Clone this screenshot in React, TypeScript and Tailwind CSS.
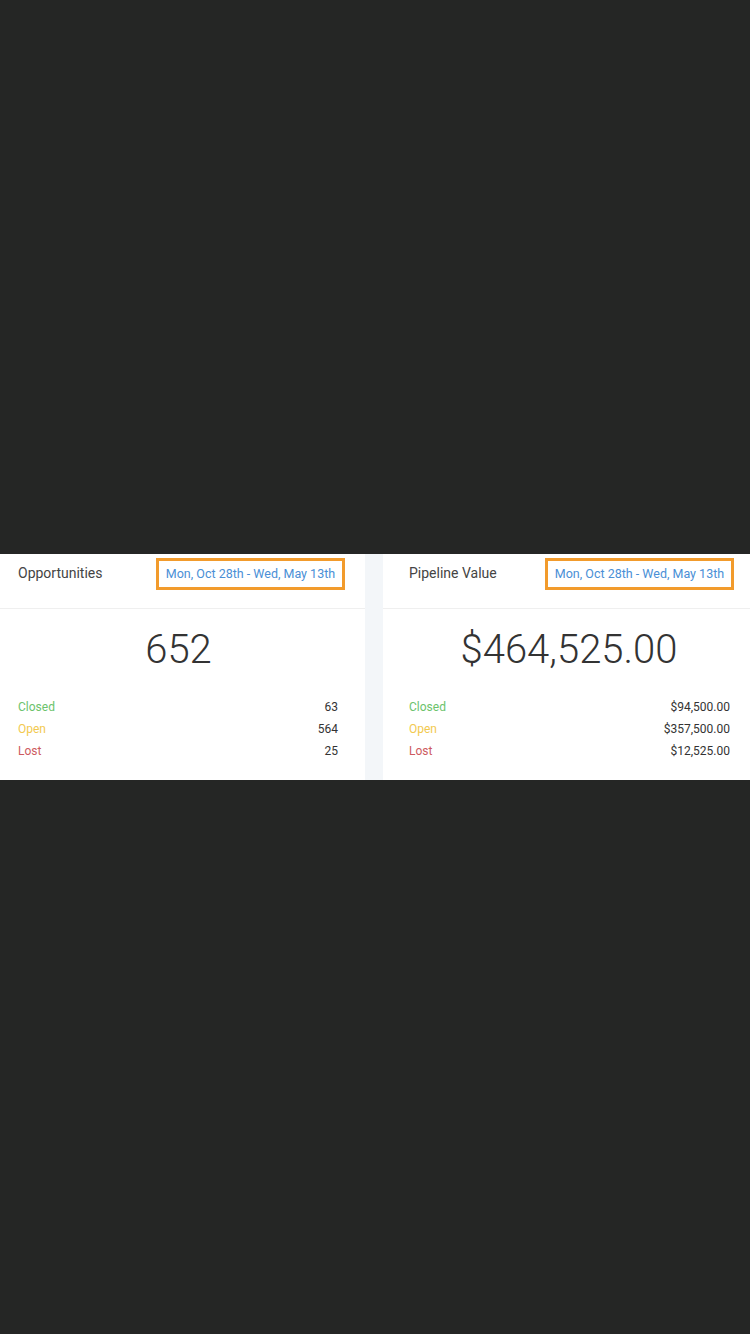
const rows = [
  { label: 'Closed', color: 'text-[#6cc36c]' },
  { label: 'Open', color: 'text-[#f2c94f]' },
  { label: 'Lost', color: 'text-[#cd5a60]' },
];

function DateRange() {
  return (
    <div className="flex h-[32px] w-[189px] items-center justify-center border-[3px] border-[#f29b2c] text-[12.5px] text-[#4a8fd6]">
      Mon, Oct 28th - Wed, May 13th
    </div>
  );
}

function StatCard({
  title,
  total,
  values,
  className,
  headerClass,
  totalClass,
  rowClass,
}: {
  title: string;
  total: string;
  values: string[];
  className: string;
  headerClass: string;
  totalClass: string;
  rowClass: string;
}) {
  return (
    <div className={`flex flex-col bg-white ${className}`}>
      {/* header with date range */}
      <div
        className={`flex h-[56px] items-start justify-between border-b border-[#efefef] pt-[4px] ${headerClass}`}
      >
        <div className="flex h-[32px] items-center pb-[1px] text-[14px] text-[#444]">{title}</div>
        <DateRange />
      </div>

      <div className={`pt-[17px] text-center text-[40px] font-light leading-[48px] text-[#333] ${totalClass}`}>
        {total}
      </div>

      <div className={`flex flex-col pt-[22px] pb-[18px] ${rowClass}`}>
        {rows.map((r, i) => (
          <div key={r.label} className="flex h-[22px] items-center justify-between text-[12px]">
            <span className={r.color}>{r.label}</span>
            <span className="text-[#333]">{values[i]}</span>
          </div>
        ))}
      </div>
    </div>
  );
}

export default function App() {
  return (
    <main
      className="flex min-h-[1334px] flex-col justify-center bg-[#252625]"
      style={{ fontFamily: 'Roboto, "Liberation Sans", sans-serif' }}
    >
      <div className="flex h-[226px] bg-[#f3f6f9]">
        <StatCard
          title="Opportunities"
          total="652"
          values={['63', '564', '25']}
          className="w-[365px]"
          headerClass="pl-[18px] pr-[20px]"
          totalClass="pr-[8px]"
          rowClass="pl-[18px] pr-[27px]"
        />
        <div className="w-[18px]" />
        <StatCard
          title="Pipeline Value"
          total="$464,525.00"
          values={['$94,500.00', '$357,500.00', '$12,525.00']}
          className="w-[367px]"
          headerClass="pl-[26px] pr-[16px]"
          totalClass="pl-[5px]"
          rowClass="pl-[26px] pr-[20px]"
        />
      </div>
    </main>
  );
}
